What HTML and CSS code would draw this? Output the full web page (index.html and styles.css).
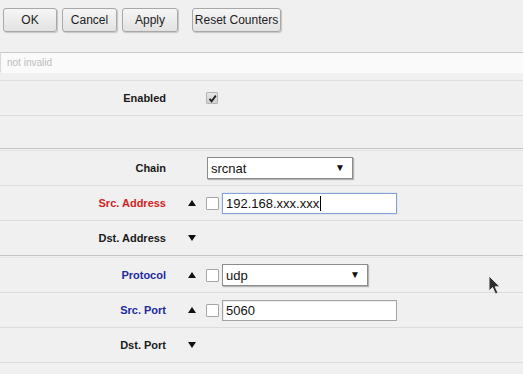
FILE: index.html
```html
<!DOCTYPE html>
<html>
<head>
<meta charset="utf-8">
<link rel="stylesheet" href="styles.css">
</head>
<body>
<div class="toolbar">
  <button class="btn w-ok">OK</button>
  <button class="btn w-cancel">Cancel</button>
  <button class="btn w-apply">Apply</button>
  <button class="btn w-reset">Reset Counters</button>
</div>
<div class="status">not invalid</div>
<div class="form">
  <div class="section">
    <div class="row">
      <div class="label">Enabled</div>
      <div class="tog"></div>
      <span class="check checked"><svg width="9" height="9" viewBox="0 0 9 9"><path d="M1.5 4.8 L3.6 7.2 L7.8 1.6" fill="none" stroke="#222" stroke-width="1.8"/></svg></span>
    </div>
    <div class="row empty"></div>
  </div>
  <div class="section">
    <div class="row">
      <div class="label">Chain</div>
      <div class="tog"></div>
      <div class="select chain"><span>srcnat</span><span class="arr">▼</span></div>
    </div>
    <div class="row">
      <div class="label red">Src. Address</div>
      <div class="tog"><span class="up"></span></div>
      <span class="check"></span>
      <div class="input focus">192.168.xxx.xxx<span class="caret"></span></div>
    </div>
    <div class="row">
      <div class="label">Dst. Address</div>
      <div class="tog"><span class="down"></span></div>
    </div>
  </div>
  <div class="section">
    <div class="row">
      <div class="label blue">Protocol</div>
      <div class="tog"><span class="up"></span></div>
      <span class="check"></span>
      <div class="select proto"><span>udp</span><span class="arr">▼</span></div>
    </div>
    <div class="row">
      <div class="label blue">Src. Port</div>
      <div class="tog"><span class="up"></span></div>
      <span class="check"></span>
      <div class="input">5060</div>
    </div>
    <div class="row">
      <div class="label">Dst. Port</div>
      <div class="tog"><span class="down"></span></div>
    </div>
    <div class="row tail"></div>
  </div>
</div>
<svg class="cursor" width="16" height="22" viewBox="0 0 16 22"><path d="M1 1 L1 16 L4.5 12.5 L7.5 19 L10 18 L7.2 11.8 L12 11.8 Z" fill="#2e2e2e" stroke="#e8e8e8" stroke-width="1"/></svg>
</body>
</html>
```
FILE: styles.css
```css
html, body {
  margin: 0;
  padding: 0;
  background: #f0f0f0;
  font-family: "Liberation Sans", Arial, sans-serif;
  overflow: hidden;
}
.toolbar {
  height: 52px;
  box-sizing: border-box;
  padding: 8px 0 0 3px;
  display: flex;
  align-items: flex-start;
  gap: 5px;
}
.btn {
  height: 24px;
  margin: 0;
  padding: 0;
  border: 1px solid #a8a8a8;
  border-radius: 3px;
  background: linear-gradient(#f6f6f6, #e2e2e2);
  box-shadow: 1px 1px 1px rgba(0,0,0,0.18);
  font-family: "Liberation Sans", Arial, sans-serif;
  font-size: 12px;
  color: #222;
}
.w-ok { width: 54px; }
.w-cancel { width: 55px; }
.w-apply { width: 56px; }
.w-reset { width: 89px; margin-left: 9px; }
.status {
  height: 19px;
  border-top: 1px solid #c9c9c9;
  border-left: 1px solid #d8d8d8;
  border-bottom: 1px solid #fcfcfc;
  background: #fafafa;
  color: #bdbdbd;
  font-size: 10px;
  line-height: 19px;
  padding-left: 6px;
  margin-bottom: 7px;
}
.form {
  border-top: 1px solid #dedede;
}
.section {
  border-bottom: 1px solid #c4c4c4;
}
.section + .section {
  margin-top: 1px;
  border-top: 1px solid #e4e4e4;
}
.section:last-child { border-bottom: none; }
.row {
  height: 34px;
  border-bottom: 1px solid #dcdcdc;
  display: flex;
  align-items: center;
}
.row:last-child { border-bottom: none; }
.row.empty { height: 32px; }
.row.tail { height: 10px; }
.label {
  width: 166px;
  padding-right: 1px;
  text-align: right;
  font-size: 11px;
  font-weight: bold;
  color: #1a1a1a;
}
.label.red { color: #d21f1f; }
.label.blue { color: #1d2aa0; }
.tog {
  width: 39px;
  display: flex;
  align-items: center;
}
.up, .down {
  margin-left: 21px;
  width: 0;
  height: 0;
  border-left: 4.5px solid transparent;
  border-right: 4.5px solid transparent;
}
.up { border-bottom: 6px solid #111; }
.down { border-top: 6px solid #111; }
.check {
  width: 11px;
  height: 11px;
  border: 1px solid #a6a6a6;
  background: #fff;
  border-radius: 1px;
  margin-right: 3px;
  display: flex;
  align-items: center;
  justify-content: center;
}
.check.checked {
  width: 10px;
  height: 10px;
  margin-left: 0;
  background: linear-gradient(#e6e6e6, #cfcfcf);
  border-color: #b4b4b4;
}
.select {
  height: 20px;
  border: 1px solid #8c8c8c;
  background: #fff;
  box-shadow: 1px 1px 1px rgba(0,0,0,0.25);
  display: flex;
  align-items: center;
  justify-content: space-between;
  padding: 0 7px 0 3px;
  font-size: 13px;
  color: #111;
}
.select.chain { width: 134px; margin-left: 1px; }
.select.proto { width: 134px; }
.arr { font-size: 10px; margin-top: -2px; }
.input {
  width: 170px;
  height: 19px;
  border: 1px solid #a4a4a4;
  background: #fff;
  box-shadow: inset 1px 1px 1px rgba(0,0,0,0.08);
  font-size: 13px;
  line-height: 19px;
  padding-left: 3px;
  color: #111;
  display: flex;
  align-items: center;
}
.input.focus {
  border-color: #86a3d6;
  box-shadow: 0 0 1px rgba(80,120,200,0.5);
}
.caret {
  display: inline-block;
  width: 1px;
  height: 15px;
  background: #000;
  margin-left: 1px;
}
.cursor {
  position: absolute;
  left: 488px;
  top: 275px;
}
```
